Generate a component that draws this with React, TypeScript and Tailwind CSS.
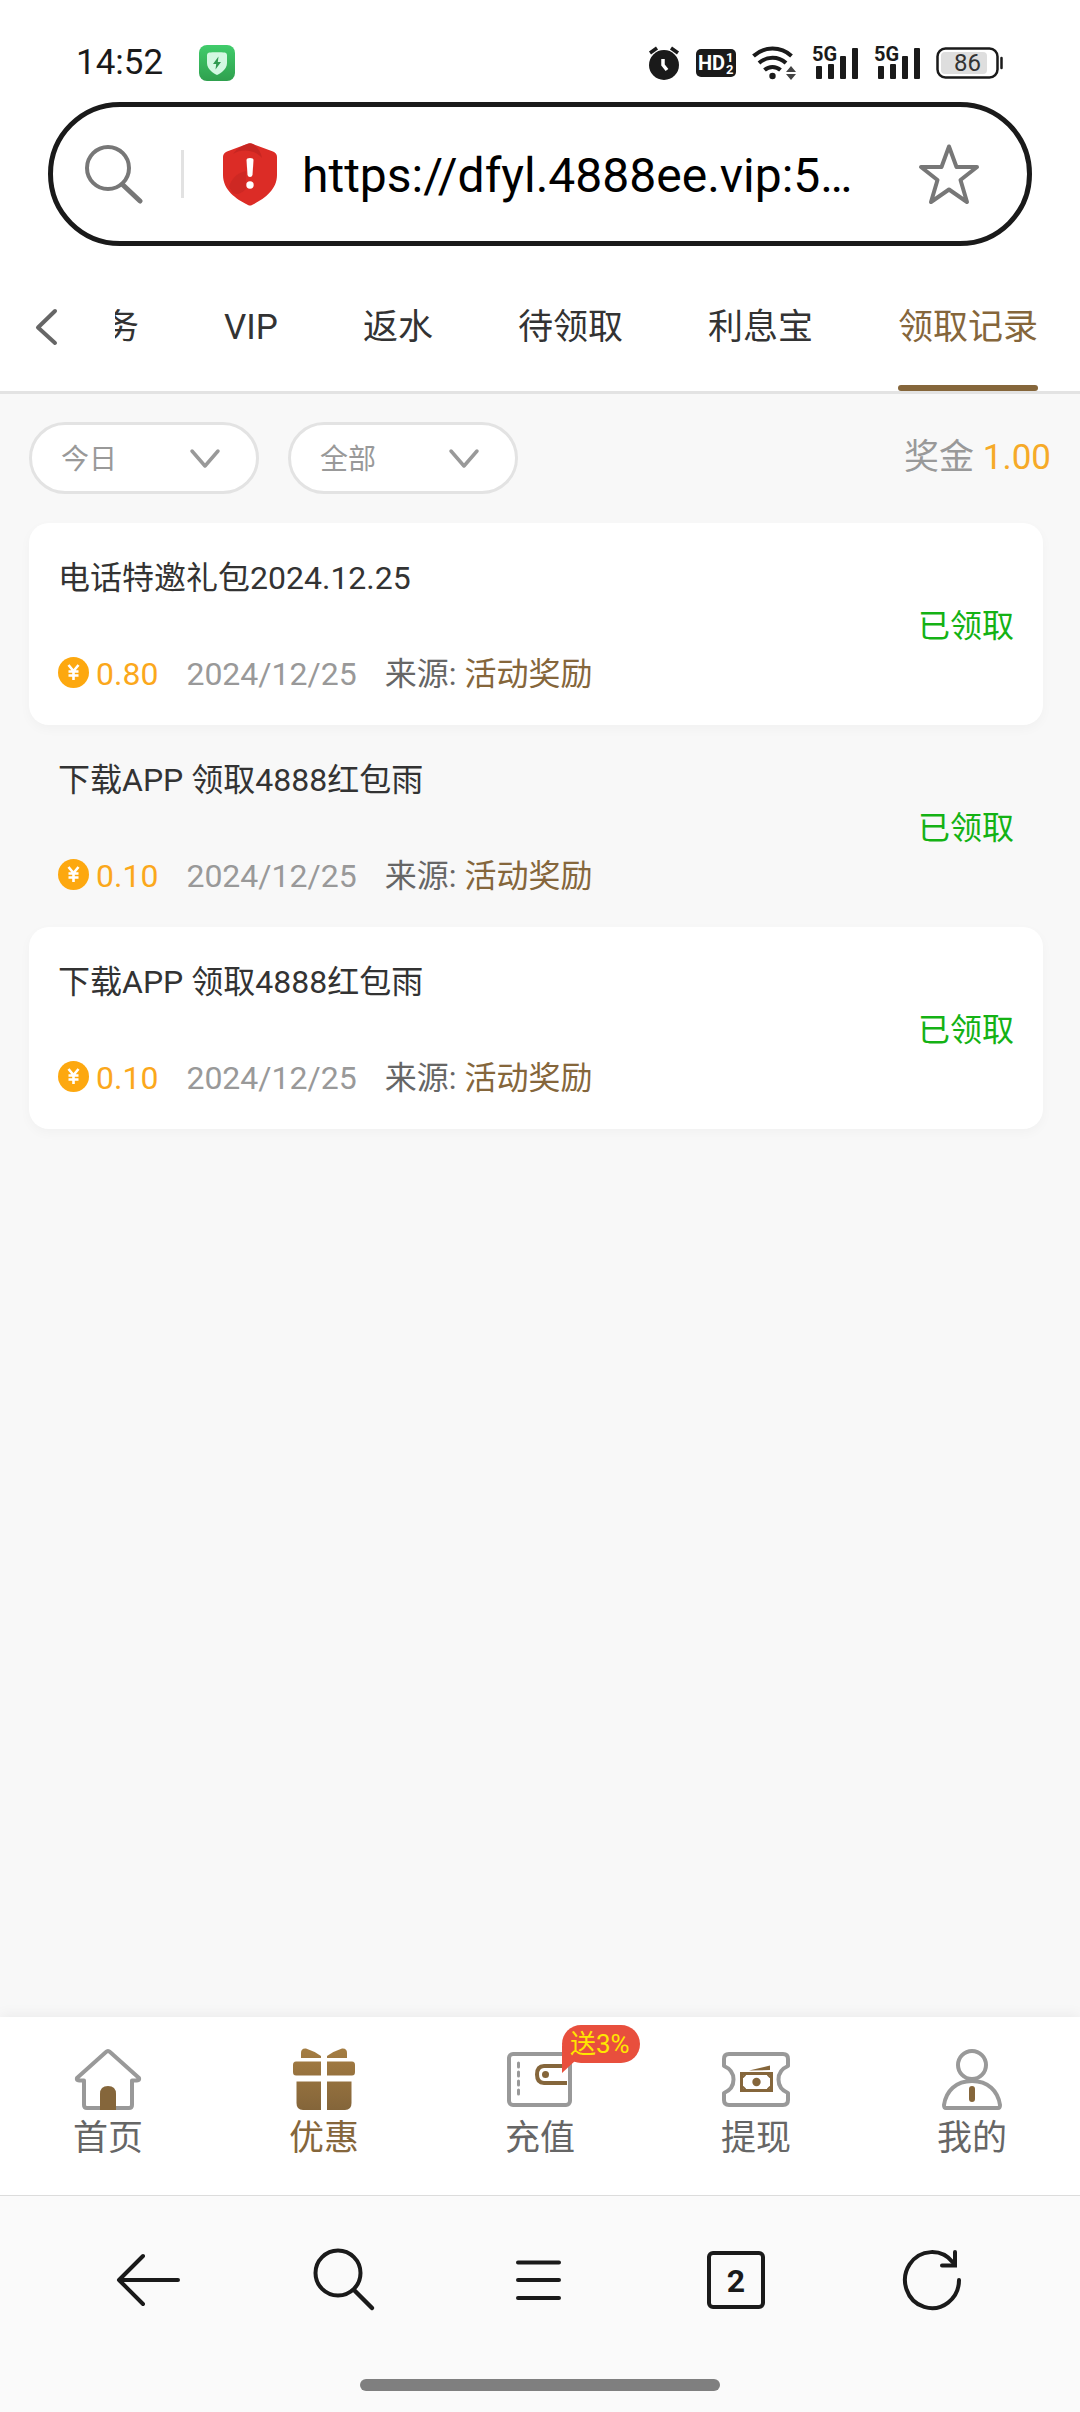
import { useState, type ReactNode } from "react";

const tabs = ["任务", "VIP", "返水", "待领取", "利息宝", "领取记录"];

const records = [
  { title: "电话特邀礼包2024.12.25", amount: "0.80", date: "2024/12/25", source: "活动奖励" },
  { title: "下载APP 领取4888红包雨", amount: "0.10", date: "2024/12/25", source: "活动奖励" },
  { title: "下载APP 领取4888红包雨", amount: "0.10", date: "2024/12/25", source: "活动奖励" },
];

function Signal() {
  return (
    <svg className="overflow-visible" width="46" height="34" viewBox="0 0 46 34" fill="#1a1a1a">
      <text x="0" y="15" fontSize="20" fontWeight="700">
        5G
      </text>
      <rect x="4" y="20" width="6" height="13" rx="1" />
      <rect x="16" y="18" width="6" height="15" rx="1" />
      <rect x="28" y="10" width="6" height="23" rx="1" />
      <rect x="40" y="2" width="6" height="31" rx="1" />
    </svg>
  );
}

function StatusBar() {
  return (
    <div className="flex h-[102px] items-center justify-between px-[76px] pt-6">
      <div className="flex items-center gap-9">
        <span className="text-[35px] leading-10 text-[#1a1a1a]">14:52</span>
        <svg width="36" height="36" viewBox="0 0 36 36">
          <defs>
            <linearGradient id="guard" x1="0" y1="0" x2="0" y2="1">
              <stop offset="0" stopColor="#40cc6b" />
              <stop offset="1" stopColor="#2fa04e" />
            </linearGradient>
          </defs>
          <rect width="36" height="36" rx="8" fill="url(#guard)" />
          <path d="M10 7.500C14 7 22 7 26 7.500Q28 8 28 10V18C28 24 22 28 18 30C14 28 8 24 8 18V10Q8 8 10 7.500Z" fill="#d3f8e2" />
          <path d="M19.500 11.500L14 19H17.200L16.500 24.500L22 17H18.800Z" fill="#2f9a50" />
        </svg>
      </div>

      <div className="flex items-center gap-4">
        <svg width="32" height="36" viewBox="0 0 32 36" fill="none">
          <circle cx="16" cy="20" r="15" fill="#1a1a1a" />
          <path d="M2 8L9 3M30 8L23 3" stroke="#1a1a1a" strokeWidth="3.500" />
          <path d="M15 14V20L19 25" stroke="#fff" strokeWidth="3.500" />
        </svg>
        <svg className="overflow-visible" width="40" height="28" viewBox="0 0 40 28">
          <rect width="40" height="28" rx="5" fill="#1a1a1a" />
          <text x="2" y="21" fontSize="20" fontWeight="700" fill="#fff">
            HD
          </text>
          <text x="30" y="13" fontSize="13" fontWeight="700" fill="#fff">
            1
          </text>
          <text x="30" y="25" fontSize="13" fontWeight="700" fill="#fff">
            2
          </text>
        </svg>
        <svg width="44" height="34" viewBox="0 0 44 34" fill="none">
          <path d="M1.500 10A28 28 0 0 1 39.500 10" stroke="#1a1a1a" strokeWidth="4" />
          <path d="M7 17A20 20 0 0 1 34 17" stroke="#1a1a1a" strokeWidth="4" />
          <path d="M12.500 24A12 12 0 0 1 28.500 24" stroke="#1a1a1a" strokeWidth="4" />
          <circle cx="20.500" cy="30" r="3.200" fill="#1a1a1a" />
          <path d="M39 20L44 26H34Z M39 34L44 28H34Z" fill="#444" />
        </svg>
        <Signal />
        <Signal />
        <svg width="68" height="32" viewBox="0 0 68 32" fill="none">
          <rect x="1.500" y="1.500" width="60" height="29" rx="8" stroke="#1a1a1a" strokeWidth="2.500" />
          <rect x="5" y="5" width="46" height="22" rx="4" fill="#dedede" />
          <path d="M65.500 11V21" stroke="#1a1a1a" strokeWidth="2.500" strokeLinecap="round" />
          <text x="31.500" y="24" fontSize="24" textAnchor="middle" fill="#333">
            86
          </text>
        </svg>
      </div>
    </div>
  );
}

function AddressBar() {
  return (
    <div className="mx-12 flex h-36 items-center rounded-full border-[5px] border-[#1a1a1a] bg-white pr-[46px] pl-8">
      <svg className="shrink-0" width="58" height="60" viewBox="0 0 58 60" fill="none" stroke="#777" strokeWidth="4">
        <circle cx="23" cy="24" r="21" />
        <path d="M38 41L55 57" strokeWidth="5" strokeLinecap="round" />
      </svg>
      <div className="mx-[38px] h-12 w-[3px] shrink-0 bg-[#e2e2e2]" />
      <svg className="shrink-0" width="56" height="64" viewBox="0 0 56 64">
        <path d="M25 2Q28 .5 31 2L51 9.500Q55 11 55 15V33C55 48 42 57 30 63Q28 64 26 63C14 57 1 48 1 33V15Q1 11 5 9.500Z" fill="#dc2c26" />
        <path d="M25 2Q28 .5 31 2C36 6 39 10 40 16C34 8 20 6 11 12C15 7 19 4 25 2Z" fill="#bd2421" opacity=".7" />
        <path d="M7 45C9 37 15 31 24 29V47C19 52 14 53 11 51Z" fill="#bd2421" opacity=".45" />
        <path d="M24.500 18Q24.500 16 28 16Q31.500 16 31.500 18L30.500 33Q30 35 28 35Q26 35 25.500 33Z" fill="#fff" />
        <circle cx="28" cy="43" r="3.700" fill="#fff" />
      </svg>
      <input
        type="text"
        readOnly
        aria-label="网址"
        value="https://dfyl.4888ee.vip:5…"
        className="ml-6 min-w-0 flex-1 bg-transparent pt-1 text-[48px] leading-[60px] text-black outline-none"
      />
      <button type="button" aria-label="收藏" className="shrink-0">
        <svg width="64" height="64" viewBox="0 0 64 64" fill="none" stroke="#777" strokeWidth="4" strokeLinejoin="round">
          <path d="M32 4.500L39.500 25H60L43.500 38L50 60L32 47.500L14 60L20.500 38L4 25H24.500Z" />
        </svg>
      </button>
    </div>
  );
}

function TabStrip() {
  const [active, setActive] = useState("领取记录");
  return (
    <nav className="mt-4 flex h-[132px] border-b-[3px] border-[#e3e3e3]">
      <button type="button" aria-label="返回" className="flex w-[115px] shrink-0 items-center pl-[35px]">
        <svg width="24" height="38" viewBox="0 0 24 38" fill="none" stroke="#666" strokeWidth="4" strokeLinecap="round" strokeLinejoin="round">
          <path d="M20 3L3 19.500L20 35" />
        </svg>
      </button>
      <div className="flex min-w-0 flex-1 justify-end gap-[85px] overflow-hidden pr-[42px]">
        {tabs.map((tab) => (
          <button
            key={tab}
            type="button"
            onClick={() => setActive(tab)}
            className={`relative shrink-0 pt-[3px] text-[35px] leading-[48px] whitespace-nowrap ${
              tab === active ? "text-[#85663b]" : "text-[#333]"
            }`}
          >
            {tab}
            {tab === active && <span className="absolute inset-x-0 bottom-0 h-1.5 rounded-full bg-[#85663b]" />}
          </button>
        ))}
      </div>
    </nav>
  );
}

function Filter({ label, options }: { label: string; options: string[] }) {
  return (
    <div className="relative">
      <select
        aria-label={label}
        className="h-[72px] w-[230px] appearance-none rounded-full border-[3px] border-[#e3e3e3] bg-white pt-[3px] pl-[29px] text-[28px] text-[#999] outline-none"
      >
        {options.map((o) => (
          <option key={o}>{o}</option>
        ))}
      </select>
      <svg
        className="pointer-events-none absolute top-[26px] right-[38px]"
        width="32"
        height="22"
        viewBox="0 0 32 22"
        fill="none"
        stroke="#999"
        strokeWidth="3.500"
        strokeLinecap="round"
        strokeLinejoin="round"
      >
        <path d="M3 3L16 18L29 3" />
      </svg>
    </div>
  );
}

function RecordRow({ record, raised }: { record: (typeof records)[number]; raised: boolean }) {
  return (
    <li
      className={`flex items-center justify-between px-[29px] pt-[35px] pb-[31px] text-[32px] leading-10 ${
        raised ? "rounded-[20px] bg-white shadow-[0_4px_12px_rgba(0,0,0,0.03)]" : ""
      }`}
    >
      <div className="flex flex-col gap-14">
        <h2 className="text-[#333]">{record.title}</h2>
        <div className="flex items-center gap-7">
          <span className="flex items-center gap-[7px] text-[#fba81c]">
            <svg className="mb-1" width="31" height="31" viewBox="0 0 31 31" fill="none">
              <circle cx="15.500" cy="15.500" r="15.500" fill="#fda80f" />
              <path d="M10.500 8L15.500 14L20.500 8M15.500 14V23M10.500 14.500H20.500M10.500 18.500H20.500" stroke="#fff" strokeWidth="2.600" />
            </svg>
            {record.amount}
          </span>
          <time className="text-[#999]">{record.date}</time>
          <span className="text-[#666]">
            来源: <span className="text-[#85663b]">{record.source}</span>
          </span>
        </div>
      </div>
      <span className="text-[#14b214]">已领取</span>
    </li>
  );
}

function TabIcon({ children }: { children: ReactNode }) {
  return (
    <svg width="68" height="62" viewBox="0 0 68 62" fill="none" stroke="#999" strokeWidth="4" strokeLinejoin="round" strokeLinecap="round">
      {children}
    </svg>
  );
}

const navItems = [
  {
    label: "首页",
    icon: (
      <TabIcon>
        <path d="M32 4Q34 2 36 4L65 30Q66 32.500 63 32.500H58V57Q58 60 55 60H13Q10 60 10 57V32.500H5Q2 32.500 3 30Z" />
        <path d="M26 62V46Q26 38 34 38Q42 38 42 46V62Z" fill="#85663b" stroke="none" />
      </TabIcon>
    ),
  },
  {
    label: "优惠",
    active: true,
    icon: (
      <TabIcon>
        <defs>
          <linearGradient id="gift" gradientUnits="userSpaceOnUse" x1="0" y1="0" x2="0" y2="62">
            <stop offset="0" stopColor="#a57d42" />
            <stop offset="1" stopColor="#84653a" />
          </linearGradient>
        </defs>
        <g fill="url(#gift)" stroke="none">
          <path d="M31 10H11V5Q11 0 16 .5Q24 3 31 8Z" />
          <path d="M37 10H57V5Q57 0 52 .5Q44 3 37 8Z" />
          <path d="M31 13.500V27.500H6Q3 27.500 3 24V17Q3 13.500 6 13.500Z" />
          <path d="M37 13.500V27.500H62Q65 27.500 65 24V17Q65 13.500 62 13.500Z" />
          <path d="M31 33.500V62H13Q6.500 62 6.500 55V33.500Z" />
          <path d="M37 33.500V62H55Q61.500 62 61.500 55V33.500Z" />
        </g>
      </TabIcon>
    ),
  },
  {
    label: "充值",
    badge: "送3%",
    icon: (
      <TabIcon>
        <rect x="3" y="6" width="61" height="51" rx="4" />
        <path d="M12.500 15V19M12.500 24V28M12.500 33V37M12.500 42V46" strokeWidth="3" />
        <path d="M61 18H38Q31 18 31 26.500Q31 35 38 35H61" stroke="#85663b" strokeLinecap="butt" />
        <circle cx="39.500" cy="26.500" r="3.500" fill="#85663b" stroke="none" />
      </TabIcon>
    ),
  },
  {
    label: "提现",
    icon: (
      <TabIcon>
        <path d="M7 6H61Q66 6 66 11V18Q56.500 22 56.500 31.500Q56.500 41 66 45V52Q66 57 61 57H7Q2 57 2 52V45Q11.500 41 11.500 31.500Q11.500 22 2 18V11Q2 6 7 6Z" />
        <path d="M27 22.500L48 17.500V22Z" fill="#85663b" stroke="none" />
        <rect x="19.500" y="25.500" width="30" height="17" stroke="#85663b" strokeWidth="3" strokeLinejoin="miter" />
        <path d="M21 29L23 27M48 29L46 27M21 39L23 41M48 39L46 41" stroke="#85663b" strokeWidth="2" />
        <circle cx="34.500" cy="34" r="4.200" fill="#85663b" stroke="none" />
      </TabIcon>
    ),
  },
  {
    label: "我的",
    icon: (
      <TabIcon>
        <circle cx="34" cy="17" r="14" />
        <path d="M8 60Q6 60 6 57C8 43 18 33 34 33C50 33 60 43 62 57Q62 60 60 60Z" />
        <path d="M34 41V51" stroke="#85663b" strokeWidth="6" />
      </TabIcon>
    ),
  },
];

function SiteNav() {
  return (
    <nav className="grid grid-cols-5 border-b border-[#dcdcdc] bg-white pt-[31px] pb-9 shadow-[0_-3px_12px_rgba(0,0,0,0.05)]">
      {navItems.map((item) => (
        <a
          key={item.label}
          href="#"
          className={`flex flex-col items-center gap-[9px] text-[35px] leading-10 ${
            item.active ? "text-[#85663b]" : "text-[#666]"
          }`}
        >
          <span className="relative">
            {item.icon}
            {item.badge && (
              <span className="absolute -top-[23px] left-14 flex h-[38px] items-center rounded-full bg-[#e84f3d] pr-2.5 pl-2 text-[26px] leading-[34px] whitespace-nowrap text-[#ffe600]">
                <svg className="absolute top-5 left-0" width="14" height="28" viewBox="0 0 14 28" fill="#e84f3d">
                  <path d="M0 0V28L14 15Z" />
                </svg>
                <span className="relative">{item.badge}</span>
              </span>
            )}
          </span>
          {item.label}
        </a>
      ))}
    </nav>
  );
}

function BrowserBar() {
  return (
    <footer className="flex flex-col items-center bg-[#fafafa] pt-[52px] pb-[21px]">
      <div className="grid w-full grid-cols-5 place-items-center px-[50px]">
        <button type="button" aria-label="后退">
          <svg width="64" height="64" viewBox="0 0 64 64" fill="none" stroke="#1a1a1a" strokeWidth="4" strokeLinecap="round" strokeLinejoin="round">
            <path d="M27 8L3 32L27 56M3 32H62" />
          </svg>
        </button>
        <button type="button" aria-label="搜索">
          <svg width="64" height="64" viewBox="0 0 64 64" fill="none" stroke="#1a1a1a" strokeWidth="4" strokeLinecap="round">
            <circle cx="26" cy="25" r="22.500" />
            <path d="M42 42L60 60" strokeWidth="4.500" />
          </svg>
        </button>
        <button type="button" aria-label="菜单">
          <svg width="48" height="64" viewBox="0 0 48 64" fill="none" stroke="#1a1a1a" strokeWidth="4" strokeLinecap="round">
            <path d="M2 14.500H43M2 32H43M2 50H43" />
          </svg>
        </button>
        <button
          type="button"
          aria-label="标签页"
          className="flex h-[58px] w-[58px] items-center justify-center rounded-md border-4 border-[#1a1a1a] pt-0.5 text-[32px] leading-10 font-bold text-[#1a1a1a]"
        >
          2
        </button>
        <button type="button" aria-label="刷新">
          <svg width="64" height="64" viewBox="0 0 64 64" fill="none" stroke="#1a1a1a" strokeWidth="4" strokeLinecap="round">
            <path d="M59 32A27 28 0 1 1 53 14.500" />
            <path d="M55 4V17.500H42" />
          </svg>
        </button>
      </div>
      <div className="mt-[67px] h-3 w-1/3 rounded-full bg-[#7f7f7f]" />
    </footer>
  );
}

export default function App() {
  return (
    <div className="flex min-h-screen flex-col bg-[#f8f8f8] font-[Roboto,'Noto_Sans_CJK_SC',sans-serif]">
      <header className="bg-white">
        <StatusBar />
        <AddressBar />
        <TabStrip />
      </header>

      <main className="flex-1">
        <div className="flex items-center gap-[29px] px-[29px] pt-7 pb-[29px]">
          <Filter label="日期" options={["今日", "昨日", "近7日"]} />
          <Filter label="类型" options={["全部", "活动奖励"]} />
          <p className="ml-auto text-[35px] leading-[48px] text-[#999]">
            奖金 <span className="text-[#f6aa28]">1.00</span>
          </p>
        </div>
        <ul className="mr-[37px] ml-[29px]">
          {records.map((record, i) => (
            <RecordRow key={i} record={record} raised={i % 2 === 0} />
          ))}
        </ul>
      </main>

      <SiteNav />
      <BrowserBar />
    </div>
  );
}
